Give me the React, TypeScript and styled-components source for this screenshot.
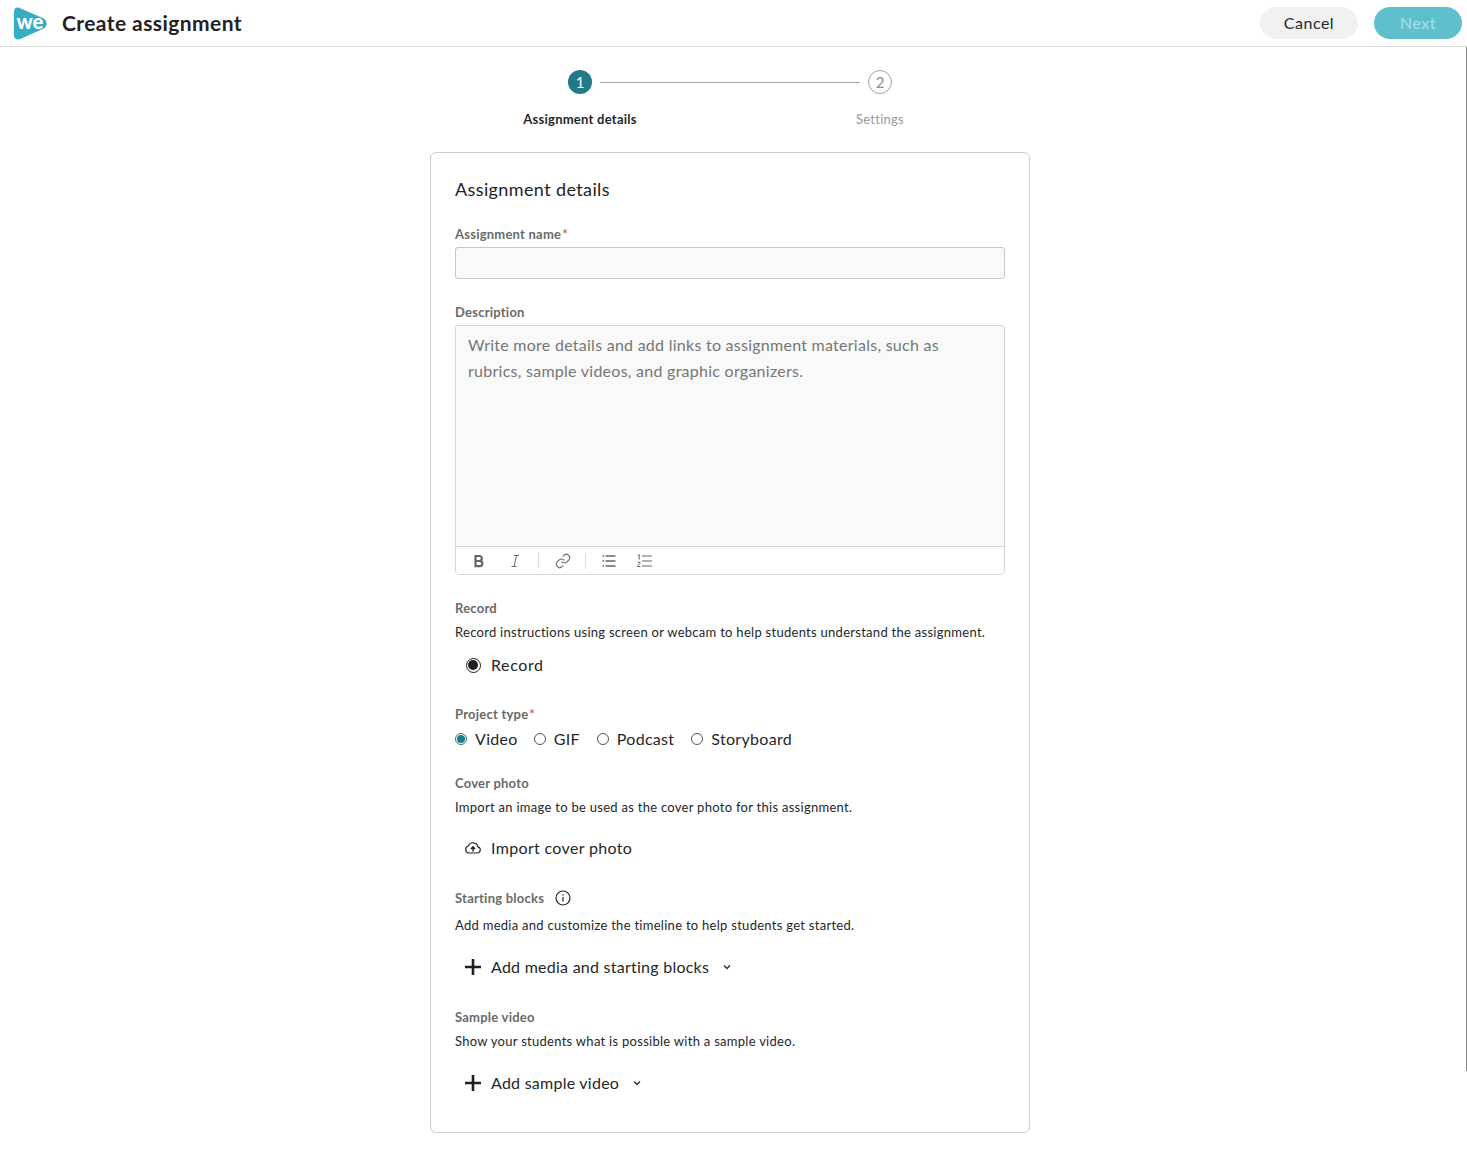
import React from "react";
import styled, { createGlobalStyle } from "styled-components";

const Global = createGlobalStyle`
  html, body { margin: 0; padding: 0; background: #fff; }
  body { font-family: Lato, "Open Sans", sans-serif; color: #1d1f21; }
  * { box-sizing: border-box; }
`;
const Page = styled.div`
  position: relative;
  width: 1467px;
  height: 1164px;
  overflow: hidden;
`;
const ScrollThumb = styled.div`
  position: absolute;
  top: 47px;
  right: 0;
  width: 1px;
  height: 1024px;
  background: #8a8a8a;
`;
const Header = styled.header`
  height: 47px;
  border-bottom: 1px solid #dcdcdc;
  display: flex;
  align-items: center;
  padding: 0 5px 0 14px;
`;
const Logo = styled.svg`
  width: 33px;
  height: 33px;
  margin-right: 15px;
  flex: none;
`;
const Title = styled.h1`
  margin: 0;
  padding-bottom: 2px;
  font-size: 21px;
  font-weight: 700;
  letter-spacing: 0.42px;
  flex: 1;
  color: #1f2225;
`;
const PillButton = styled.button<{ $primary?: boolean }>`
  height: 32px;
  width: ${(p) => (p.$primary ? "88px" : "98px")};
  margin-left: ${(p) => (p.$primary ? "16px" : "0")};
  padding: 0 0 2px;
  border: 0;
  border-radius: 16px;
  font: 400 16px Lato, sans-serif;
  letter-spacing: 0.5px;
  background: ${(p) => (p.$primary ? "#5fbfcd" : "#f1f1f1")};
  color: ${(p) => (p.$primary ? "#a3e1ea" : "#24272a")};
`;
const Main = styled.main`
  display: flex;
  flex-direction: column;
  align-items: center;
  padding-right: 7px;
  width: 1467px;
`;
const StepTrack = styled.div`
  width: 324px;
  margin-top: 23px;
  display: flex;
  align-items: center;
`;
const StepCircle = styled.div<{ $active?: boolean }>`
  width: 24px;
  height: 24px;
  border-radius: 50%;
  flex: none;
  display: flex;
  align-items: center;
  justify-content: center;
  font-size: 15px;
  background: ${(p) => (p.$active ? "#217a8a" : "#fff")};
  color: ${(p) => (p.$active ? "#fff" : "#8d8d8d")};
  border: ${(p) => (p.$active ? "0" : "1px solid #a0a0a0")};
`;
const StepLine = styled.div`
  flex: 1;
  height: 1px;
  margin: 0 8px;
  background: #a8a8a8;
`;
const StepLabels = styled.div`
  width: 600px;
  margin-top: 16px;
  display: grid;
  grid-template-columns: 1fr 1fr;
  line-height: 18px;
`;
const StepLabel = styled.div<{ $active?: boolean }>`
  text-align: center;
  font-size: 13px;
  letter-spacing: 0.25px;
  font-weight: ${(p) => (p.$active ? 700 : 400)};
  color: ${(p) => (p.$active ? "#24272a" : "#9a9a9a")};
`;
const Card = styled.section`
  width: 600px;
  height: 981px;
  margin-top: 24px;
  border: 1px solid #cfcfcf;
  border-radius: 6px;
  padding: 23px 24px 0;
`;
const CardTitle = styled.h2`
  margin: 0;
  font-size: 18px;
  line-height: 26px;
  font-weight: 400;
  letter-spacing: 0.38px;
  color: #1f2225;
`;
const Label = styled.div<{ $top: number }>`
  margin-top: ${(p) => p.$top}px;
  font-size: 13px;
  line-height: 18px;
  font-weight: 700;
  letter-spacing: 0.23px;
  color: #6a6a6a;
  display: flex;
  align-items: center;
`;
const Required = styled.span`
  color: #b8774a;
  margin-left: 1px;
`;
const TextInput = styled.div`
  height: 32px;
  margin-top: 4px;
  background: #f9f9f9;
  border: 1px solid #c8c8c8;
  border-radius: 3px;
`;
const Editor = styled.div`
  margin-top: 4px;
  height: 250px;
  border: 1px solid #d4d4d4;
  border-radius: 3px 3px 5px 5px;
  display: flex;
  flex-direction: column;
  overflow: hidden;
`;
const EditorBody = styled.div`
  flex: 1;
  background: #f9f9f9;
  padding: 6px 12px;
  font-size: 16px;
  line-height: 26px;
  letter-spacing: 0.26px;
  color: #767676;
`;
const Toolbar = styled.div`
  height: 28px;
  border-top: 1px solid #d4d4d4;
  background: #fff;
  display: flex;
  align-items: center;
  padding-left: 15px;
`;
const ToolIcon = styled.svg<{ $gap?: number }>`
  width: 16px;
  height: 16px;
  margin-right: ${(p) => p.$gap ?? 0}px;
  flex: none;
  color: #666;
`;
const ToolDivider = styled.div<{ $gap: number }>`
  width: 1px;
  height: 16px;
  background: #dcdcdc;
  margin-right: ${(p) => p.$gap}px;
`;
const Help = styled.p<{ $top?: number }>`
  margin: ${(p) => p.$top ?? 6}px 0 0;
  font-size: 13px;
  line-height: 18px;
  letter-spacing: 0.28px;
  color: #24272a;
`;
const ActionRow = styled.div<{ $top: number; $spacing: number }>`
  margin-top: ${(p) => p.$top}px;
  height: 24px;
  padding: 0 0 2px 10px;
  display: flex;
  align-items: center;
  font-size: 16px;
  letter-spacing: ${(p) => p.$spacing}px;
  color: #24272a;
`;
const ActionIcon = styled.span`
  width: 16px;
  height: 16px;
  margin: 2px 10px 0 0;
  display: flex;
  align-items: center;
  justify-content: center;
  flex: none;
`;
const RecordDot = styled.span`
  width: 15px;
  height: 15px;
  border-radius: 50%;
  border: 1.5px solid #1d1f21;
  display: flex;
  align-items: center;
  justify-content: center;
  &::after {
    content: "";
    width: 10px;
    height: 10px;
    border-radius: 50%;
    background: #1d1f21;
  }
`;
const Radios = styled.div`
  margin-top: 4px;
  height: 24px;
  padding-bottom: 2px;
  display: flex;
  align-items: center;
  font-size: 16px;
  letter-spacing: 0.3px;
  color: #24272a;
`;
const RadioOption = styled.div`
  display: flex;
  align-items: center;
  margin-right: 17px;
  &:first-child {
    margin-right: 16px;
  }
`;
const RadioMark = styled.span<{ $on?: boolean }>`
  width: 12px;
  height: 12px;
  border-radius: 50%;
  margin: 2px 8px 0 0;
  border: 1px solid ${(p) => (p.$on ? "#217a8a" : "#555")};
  display: flex;
  align-items: center;
  justify-content: center;
  &::after {
    content: "";
    display: ${(p) => (p.$on ? "block" : "none")};
    width: 8px;
    height: 8px;
    border-radius: 50%;
    background: #217a8a;
  }
`;
const InfoIcon = styled.svg`
  width: 16px;
  height: 16px;
  margin-left: 11px;
  color: #24272a;
`;
const Caret = styled.svg`
  width: 8px;
  height: 6px;
  margin: 1px 0 0 14px;
  color: #24272a;
`;

const Plus = () => (
  <svg width="16" height="16" viewBox="0 0 16 16" fill="none" stroke="#1d1f21" strokeWidth="2.600">
    <path d="M8 0v16M0 8h16" />
  </svg>
);
const CaretDown = () => (
  <Caret viewBox="0 0 8 6" fill="none" stroke="currentColor" strokeWidth="1.3">
    <path d="M1 1.5l3 3 3-3" />
  </Caret>
);

export default function App() {
  return (
    <Page>
      <Global />
      <Header>
        <Logo viewBox="0 0 33 33">
          <path
            d="M0 4.500C0 1 2.600-.4 5.600.9l23.600 10.400c4.600 2 4.600 8.400 0 10.400L7 31.800C3.400 33.500 0 32 0 28.500z"
            fill="#35aec4"
          />
          <text x="2.500" y="21.500" fontFamily="Lato, sans-serif" fontWeight="900" fontSize="20" fill="#fff">
            we
          </text>
        </Logo>
        <Title>Create assignment</Title>
        <PillButton>Cancel</PillButton>
        <PillButton $primary>Next</PillButton>
      </Header>
      <Main>
        <StepTrack>
          <StepCircle $active>1</StepCircle>
          <StepLine />
          <StepCircle>2</StepCircle>
        </StepTrack>
        <StepLabels>
          <StepLabel $active>Assignment details</StepLabel>
          <StepLabel>Settings</StepLabel>
        </StepLabels>
        <Card>
          <CardTitle>Assignment details</CardTitle>
          <Label $top={23}>
            Assignment name<Required>*</Required>
          </Label>
          <TextInput />
          <Label $top={24}>Description</Label>
          <Editor>
            <EditorBody>
              Write more details and add links to assignment materials, such as rubrics, sample videos, and graphic
              organizers.
            </EditorBody>
            <Toolbar>
              <ToolIcon $gap={20} viewBox="0 0 16 16" fill="none" stroke="currentColor" strokeWidth="2.200">
                <path d="M4.500 3h3.800a2.400 2.400 0 0 1 0 5H4.500zM4.500 8h4.300a2.600 2.600 0 0 1 0 5.200H4.500z" />
              </ToolIcon>
              <ToolIcon $gap={15} viewBox="0 0 16 16" fill="none" stroke="currentColor" strokeWidth="1">
                <path d="M7 2.500h5M4.500 13.500h5M9.500 2.500L7 13.500" />
              </ToolIcon>
              <ToolDivider $gap={16} />
              <ToolIcon $gap={14} viewBox="0 0 24 24" fill="none" stroke="currentColor" strokeWidth="1.600">
                <path d="M10 13a5 5 0 0 0 7.540.54l3-3a5 5 0 0 0-7.070-7.070l-1.720 1.710" />
                <path d="M14 11a5 5 0 0 0-7.540-.54l-3 3a5 5 0 0 0 7.070 7.070l1.710-1.710" />
              </ToolIcon>
              <ToolDivider $gap={16} />
              <ToolIcon $gap={19} viewBox="0 0 16 16" fill="none" stroke="currentColor" strokeWidth="1.300">
                <path d="M3.500 3h10M3.500 8h10M3.500 13h10M.5 3h1.500M.5 8h1.500M.5 13h1.500" />
              </ToolIcon>
              <ToolIcon viewBox="0 0 16 16" fill="none" stroke="currentColor" strokeWidth="1.200">
                <path d="M5 3h10M5 8h10M5 13h10" />
                <path d="M1 2.200L2.200 1.500V6.500M.5 9.800c.5-1 2.700-1 2.700.3 0 1-2.700 2-2.700 3.400h2.900" strokeWidth="1" />
              </ToolIcon>
            </Toolbar>
          </Editor>
          <Label $top={24}>Record</Label>
          <Help>Record instructions using screen or webcam to help students understand the assignment.</Help>
          <ActionRow $top={12} $spacing={0.6}>
            <ActionIcon>
              <RecordDot />
            </ActionIcon>
            Record
          </ActionRow>
          <Label $top={28}>
            Project type<Required>*</Required>
          </Label>
          <Radios>
            <RadioOption>
              <RadioMark $on />
              Video
            </RadioOption>
            <RadioOption>
              <RadioMark />
              GIF
            </RadioOption>
            <RadioOption>
              <RadioMark />
              Podcast
            </RadioOption>
            <RadioOption>
              <RadioMark />
              Storyboard
            </RadioOption>
          </Radios>
          <Label $top={23}>Cover photo</Label>
          <Help>Import an image to be used as the cover photo for this assignment.</Help>
          <ActionRow $top={20} $spacing={0.33}>
            <ActionIcon>
              <svg width="16" height="16" viewBox="0 0 16 16" fill="none" stroke="#24272a" strokeWidth="1.200">
                <path d="M3.800 13h8.500a3.100 3.100 0 0 0 .6-6.100A5 5 0 0 0 3.300 6 3.600 3.600 0 0 0 3.800 13z" />
                <path d="M8 11.500V7M5.900 9L8 6.900 10.100 9" strokeWidth="1.500" />
              </svg>
            </ActionIcon>
            Import cover photo
          </ActionRow>
          <Label $top={29}>
            Starting blocks
            <InfoIcon viewBox="0 0 16 16" fill="none" stroke="currentColor" strokeWidth="1.200">
              <circle cx="8" cy="8" r="7" />
              <path d="M8 7v4.500" />
              <path d="M8 4.300v1.200" strokeWidth="1.400" />
            </InfoIcon>
          </Label>
          <Help $top={9}>Add media and customize the timeline to help students get started.</Help>
          <ActionRow $top={21} $spacing={0.25}>
            <ActionIcon>
              <Plus />
            </ActionIcon>
            Add media and starting blocks
            <CaretDown />
          </ActionRow>
          <Label $top={29}>Sample video</Label>
          <Help>Show your students what is possible with a sample video.</Help>
          <ActionRow $top={21} $spacing={0.25}>
            <ActionIcon>
              <Plus />
            </ActionIcon>
            Add sample video
            <CaretDown />
          </ActionRow>
        </Card>
      </Main>
      <ScrollThumb />
    </Page>
  );
}
